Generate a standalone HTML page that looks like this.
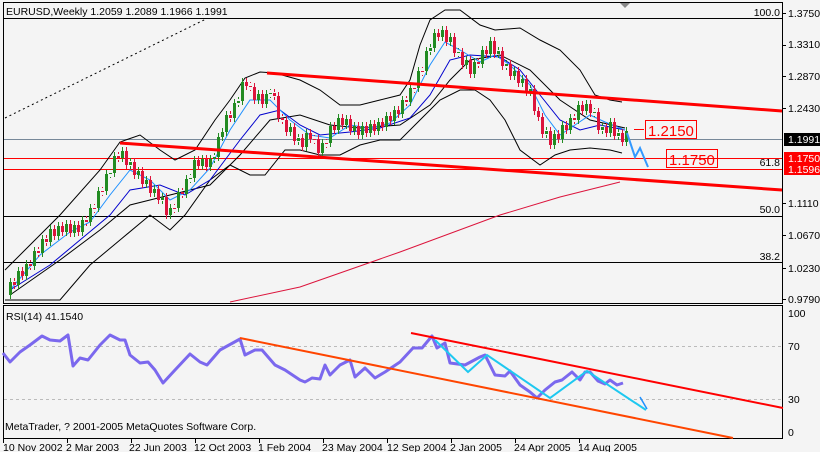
<!DOCTYPE html>
<html><head><meta charset="utf-8">
<style>
html,body{margin:0;padding:0;background:#f4f4f4;}
svg{display:block;font-family:"Liberation Sans",sans-serif;font-size:10.5px;}
</style></head><body>
<svg width="820" height="452" xmlns="http://www.w3.org/2000/svg" xmlns:xlink="http://www.w3.org/1999/xlink">
<defs><clipPath id="cp"><rect x="4" y="3" width="778" height="300"/></clipPath></defs>
<rect width="820" height="452" fill="#f4f4f4"/>
<g shape-rendering="crispEdges">
<rect x="3.5" y="2.5" width="779" height="301" fill="none" stroke="#000"/>
<rect x="3.5" y="305.5" width="779" height="133" fill="none" stroke="#000"/>
<line x1="4" y1="18.5" x2="782" y2="18.5" stroke="#000"/>
<line x1="4" y1="216.5" x2="782" y2="216.5" stroke="#000"/>
<line x1="4" y1="262.5" x2="782" y2="262.5" stroke="#000"/>
<line x1="4" y1="139.5" x2="782" y2="139.5" stroke="#778899"/>
<line x1="4" y1="158.5" x2="782" y2="158.5" stroke="#f00"/>
<line x1="4" y1="169.5" x2="782" y2="169.5" stroke="#f00"/>
<line x1="4" y1="346.5" x2="782" y2="346.5" stroke="#bbb" stroke-dasharray="3,3"/>
<line x1="4" y1="399.5" x2="782" y2="399.5" stroke="#bbb" stroke-dasharray="3,3"/>
</g>
<g clip-path="url(#cp)" fill="none">
<polyline stroke="#000" points="5,270 30,245 60,215 100,170 120,142 140,135 160,150 175,160 195,150 215,120 230,100 245,78 260,72 275,73 300,80 320,90 340,105 360,105 380,100 400,95 410,80 420,45 430,20 445,10 460,10 480,25 495,30 520,28 540,40 560,50 580,70 595,95 610,100 622,102"/>
<polyline stroke="#000" points="5,300 60,300 90,265 120,240 150,215 170,230 185,215 210,180 230,165 250,175 265,175 285,150 300,150 320,155 340,155 360,145 380,140 400,140 420,120 440,100 460,90 475,90 490,100 505,120 520,150 540,165 555,155 570,150 590,148 610,150 622,153"/>
<polyline stroke="#000" points="10,295 60,260 100,230 130,205 170,195 210,185 240,155 270,120 300,115 330,125 360,128 400,125 430,105 450,80 470,60 500,55 530,70 560,100 590,120 625,128"/>
<polyline stroke="#0000cd" points="10,290 50,265 80,240 110,215 130,190 160,185 185,195 210,180 240,140 260,115 280,110 300,125 320,135 350,132 380,128 410,118 430,95 450,60 470,55 500,57 520,70 540,95 560,120 580,130 600,125 625,130"/>
<polyline stroke="#1e90ff" points="10,290 40,255 70,232 90,222 110,195 130,170 150,180 170,200 190,190 210,168 230,130 250,100 270,100 290,120 310,135 330,138 350,125 370,128 390,123 410,105 430,65 445,42 460,50 480,62 495,55 510,65 530,85 545,115 560,135 575,125 590,115 605,122 625,130"/>
</g>
<defs>
<path id="gb" d="M10.5,282v13M18.5,271v14M26.5,264v12M34.5,251v15M42.5,239v14M50.5,229v13M58.5,226v10M66.5,224v8M74.5,225v8M82.5,220v12M90.5,208v14M98.5,191v17M106.5,174v17M110.5,173v1M114.5,156v17M122.5,151v7M130.5,162v3M138.5,171v4M146.5,180v4M154.5,189v4M162.5,197v3M170.5,208v7M178.5,192v16M186.5,179v15M190.5,178v1M194.5,160v18M202.5,159v7M210.5,159v8M214.5,157v2M218.5,137v20M222.5,132v5M226.5,115v17M234.5,103v15M238.5,101v2M242.5,82v19M258.5,94v6M266.5,94v10M270.5,93v1M290.5,127v5M298.5,138v3M306.5,133v14M322.5,143v10M330.5,126v17M338.5,118v12M346.5,119v6M354.5,126v5M362.5,126v9M370.5,124v9M378.5,122v9M386.5,116v11M394.5,110v11M402.5,100v14M410.5,88v14M418.5,71v17M426.5,51v20M430.5,48v3M434.5,33v15M442.5,30v7M450.5,37v5M458.5,52v1M466.5,60v5M474.5,62v12M482.5,50v14M490.5,41v13M498.5,51v3M506.5,64v2M514.5,71v5M522.5,79v4M530.5,89v3M546.5,131v3M554.5,134v11M562.5,125v14M570.5,118v12M578.5,105v15M586.5,104v7M594.5,112v1M602.5,127v3M610.5,122v11M618.5,133v3M626.5,131v11"/>
<path id="rb" d="M14.5,282v3M22.5,271v5M30.5,264v2M38.5,251v2M46.5,239v3M54.5,229v7M62.5,226v6M70.5,224v9M78.5,225v7M86.5,220v2M94.5,208v1M102.5,191v1M118.5,156v2M126.5,151v14M134.5,162v13M142.5,171v13M150.5,180v13M158.5,189v11M166.5,197v18M174.5,208v1M182.5,192v2M198.5,160v6M206.5,159v8M230.5,115v3M246.5,82v4M250.5,86v1M254.5,87v13M262.5,94v10M274.5,93v3M278.5,96v22M282.5,118v2M286.5,120v12M294.5,127v14M302.5,138v9M310.5,133v6M314.5,139v1M318.5,139v14M326.5,143v1M334.5,126v4M342.5,118v7M350.5,119v12M358.5,126v9M366.5,126v7M374.5,124v7M382.5,122v5M390.5,116v5M398.5,110v4M406.5,100v2M414.5,88v1M422.5,71v1M438.5,33v4M446.5,30v12M454.5,37v16M462.5,52v13M470.5,60v14M478.5,62v2M486.5,50v4M494.5,41v13M502.5,51v15M510.5,64v12M518.5,71v12M526.5,79v13M534.5,89v22M538.5,111v6M542.5,117v17M550.5,131v14M558.5,134v5M566.5,125v5M574.5,118v2M582.5,105v6M590.5,104v9M598.5,112v18M606.5,127v6M614.5,122v14M622.5,133v9"/>
</defs>
<g stroke="#228b22" fill="none" shape-rendering="crispEdges">
<use xlink:href="#gb" href="#gb" stroke-width="3"/>
<use xlink:href="#gb" href="#gb" stroke-width="1" transform="translate(0,-4)"/>
<use xlink:href="#gb" href="#gb" stroke-width="1" transform="translate(0,4)"/>
</g>
<g stroke="#dc143c" fill="none" shape-rendering="crispEdges">
<use xlink:href="#rb" href="#rb" stroke-width="3"/>
<use xlink:href="#rb" href="#rb" stroke-width="1" transform="translate(0,-4)"/>
<use xlink:href="#rb" href="#rb" stroke-width="1" transform="translate(0,4)"/>
</g>
<polyline points="230,302 300,287 400,252 500,215 560,197 620,182" fill="none" stroke="#dc143c" stroke-width="1"/>
<line x1="5" y1="118" x2="208" y2="18" stroke="#000" stroke-dasharray="2,3"/>
<line x1="267" y1="73" x2="782" y2="111" stroke="#f00" stroke-width="3"/>
<line x1="120" y1="143" x2="782" y2="190" stroke="#f00" stroke-width="3"/>
<polyline points="627,133 635,157 640,148 648,167" fill="none" stroke="#3399ff" stroke-width="2"/>
<line x1="634" y1="129.5" x2="644" y2="129.5" stroke="#f00"/>
<rect x="645.5" y="120.5" width="51" height="18" fill="none" stroke="#f00"/>
<text x="648" y="136" fill="#f00" font-size="15">1.2150</text>
<rect x="666.5" y="149.5" width="51" height="18" fill="none" stroke="#f00"/>
<text x="669" y="165" fill="#f00" font-size="15">1.1750</text>
<rect x="4" y="3" width="208" height="15" fill="#f4f4f4"/>
<text x="6" y="15" fill="#000">EURUSD,Weekly  1.2059 1.2089 1.1966 1.1991</text>
<polygon points="620,3 630,3 625,8" fill="#888"/>
<g fill="#000" text-anchor="end">
<text x="780" y="16">100.0</text><text x="780" y="166">61.8</text>
<text x="780" y="213">50.0</text><text x="780" y="260">38.2</text>
</g>
<g fill="#000">
<text x="788" y="17">1.3750</text><text x="788" y="48">1.3310</text>
<text x="788" y="80">1.2870</text><text x="788" y="112">1.2430</text>
<rect x="784" y="133" width="36" height="13" fill="#000"/><text x="788" y="143" fill="#fff">1.1991</text>
<text x="788" y="207">1.1110</text><text x="788" y="239">1.0670</text>
<text x="788" y="272">1.0230</text><text x="788" y="303">0.9790</text>
<rect x="784" y="152" width="36" height="23" fill="#f00"/>
<text x="788" y="162" fill="#fff">1.1750</text><text x="788" y="173" fill="#fff">1.1596</text>
<text x="788" y="317">100</text><text x="788" y="350">70</text>
<text x="788" y="403">30</text><text x="788" y="436">0</text>
</g>
<g stroke="#000"><line x1="782" y1="13.5" x2="786" y2="13.5"/><line x1="782" y1="45.5" x2="786" y2="45.5"/><line x1="782" y1="76.5" x2="786" y2="76.5"/><line x1="782" y1="108.5" x2="786" y2="108.5"/><line x1="782" y1="203.5" x2="786" y2="203.5"/><line x1="782" y1="235.5" x2="786" y2="235.5"/><line x1="782" y1="268.5" x2="786" y2="268.5"/><line x1="782" y1="299.5" x2="786" y2="299.5"/></g>
<polyline fill="none" stroke="#7b68ee" stroke-width="3" stroke-linejoin="round" points="3,353 10,362 20,352 30,345 42,336 50,340 60,341 68,335 73,366 80,358 88,360 100,345 110,335 120,340 125,340 130,355 140,363 148,362 155,370 163,383 175,370 190,354 200,362 207,365 220,350 240,339 245,355 255,350 262,350 275,365 285,370 300,380 305,382 312,378 320,379 325,365 330,375 340,365 350,360 355,377 365,368 375,378 385,372 400,362 413,348 422,348 432,336 437,348 445,343 450,363 465,365 480,357 485,355 495,375 505,376 510,371 520,385 530,392 537,398 545,390 555,382 562,380 572,372 580,380 585,372 590,372 598,381 605,384 610,380 617,385 623,383"/>
<line x1="240" y1="338" x2="733" y2="438" stroke="#ff4500" stroke-width="2"/>
<line x1="411" y1="333" x2="783" y2="408" stroke="#f00" stroke-width="2"/>
<polyline points="435,340 468,372 487,355 550,398 587,371 646,410" fill="none" stroke="#1ec8f0" stroke-width="2"/>
<line x1="640" y1="397" x2="647" y2="409" stroke="#1e90ff" stroke-width="1.5"/>
<text x="6" y="320" fill="#000">RSI(14) 41.1540</text>
<text x="5" y="430" fill="#000">MetaTrader, ? 2001-2005 MetaQuotes Software Corp.</text>
<g fill="#000">
<text x="3" y="451">10 Nov 2002</text><text x="66" y="451">2 Mar 2003</text>
<text x="129" y="451">22 Jun 2003</text><text x="194" y="451">12 Oct 2003</text>
<text x="258" y="451">1 Feb 2004</text><text x="322" y="451">23 May 2004</text>
<text x="387" y="451">12 Sep 2004</text><text x="450" y="451">2 Jan 2005</text>
<text x="514" y="451">24 Apr 2005</text><text x="578" y="451">14 Aug 2005</text>
</g>
<g stroke="#000" shape-rendering="crispEdges"><line x1="3.5" y1="439" x2="3.5" y2="443"/><line x1="67.5" y1="439" x2="67.5" y2="443"/><line x1="131.5" y1="439" x2="131.5" y2="443"/><line x1="195.5" y1="439" x2="195.5" y2="443"/><line x1="259.5" y1="439" x2="259.5" y2="443"/><line x1="323.5" y1="439" x2="323.5" y2="443"/><line x1="387.5" y1="439" x2="387.5" y2="443"/><line x1="451.5" y1="439" x2="451.5" y2="443"/><line x1="515.5" y1="439" x2="515.5" y2="443"/><line x1="579.5" y1="439" x2="579.5" y2="443"/></g>
</svg>
</body></html>
